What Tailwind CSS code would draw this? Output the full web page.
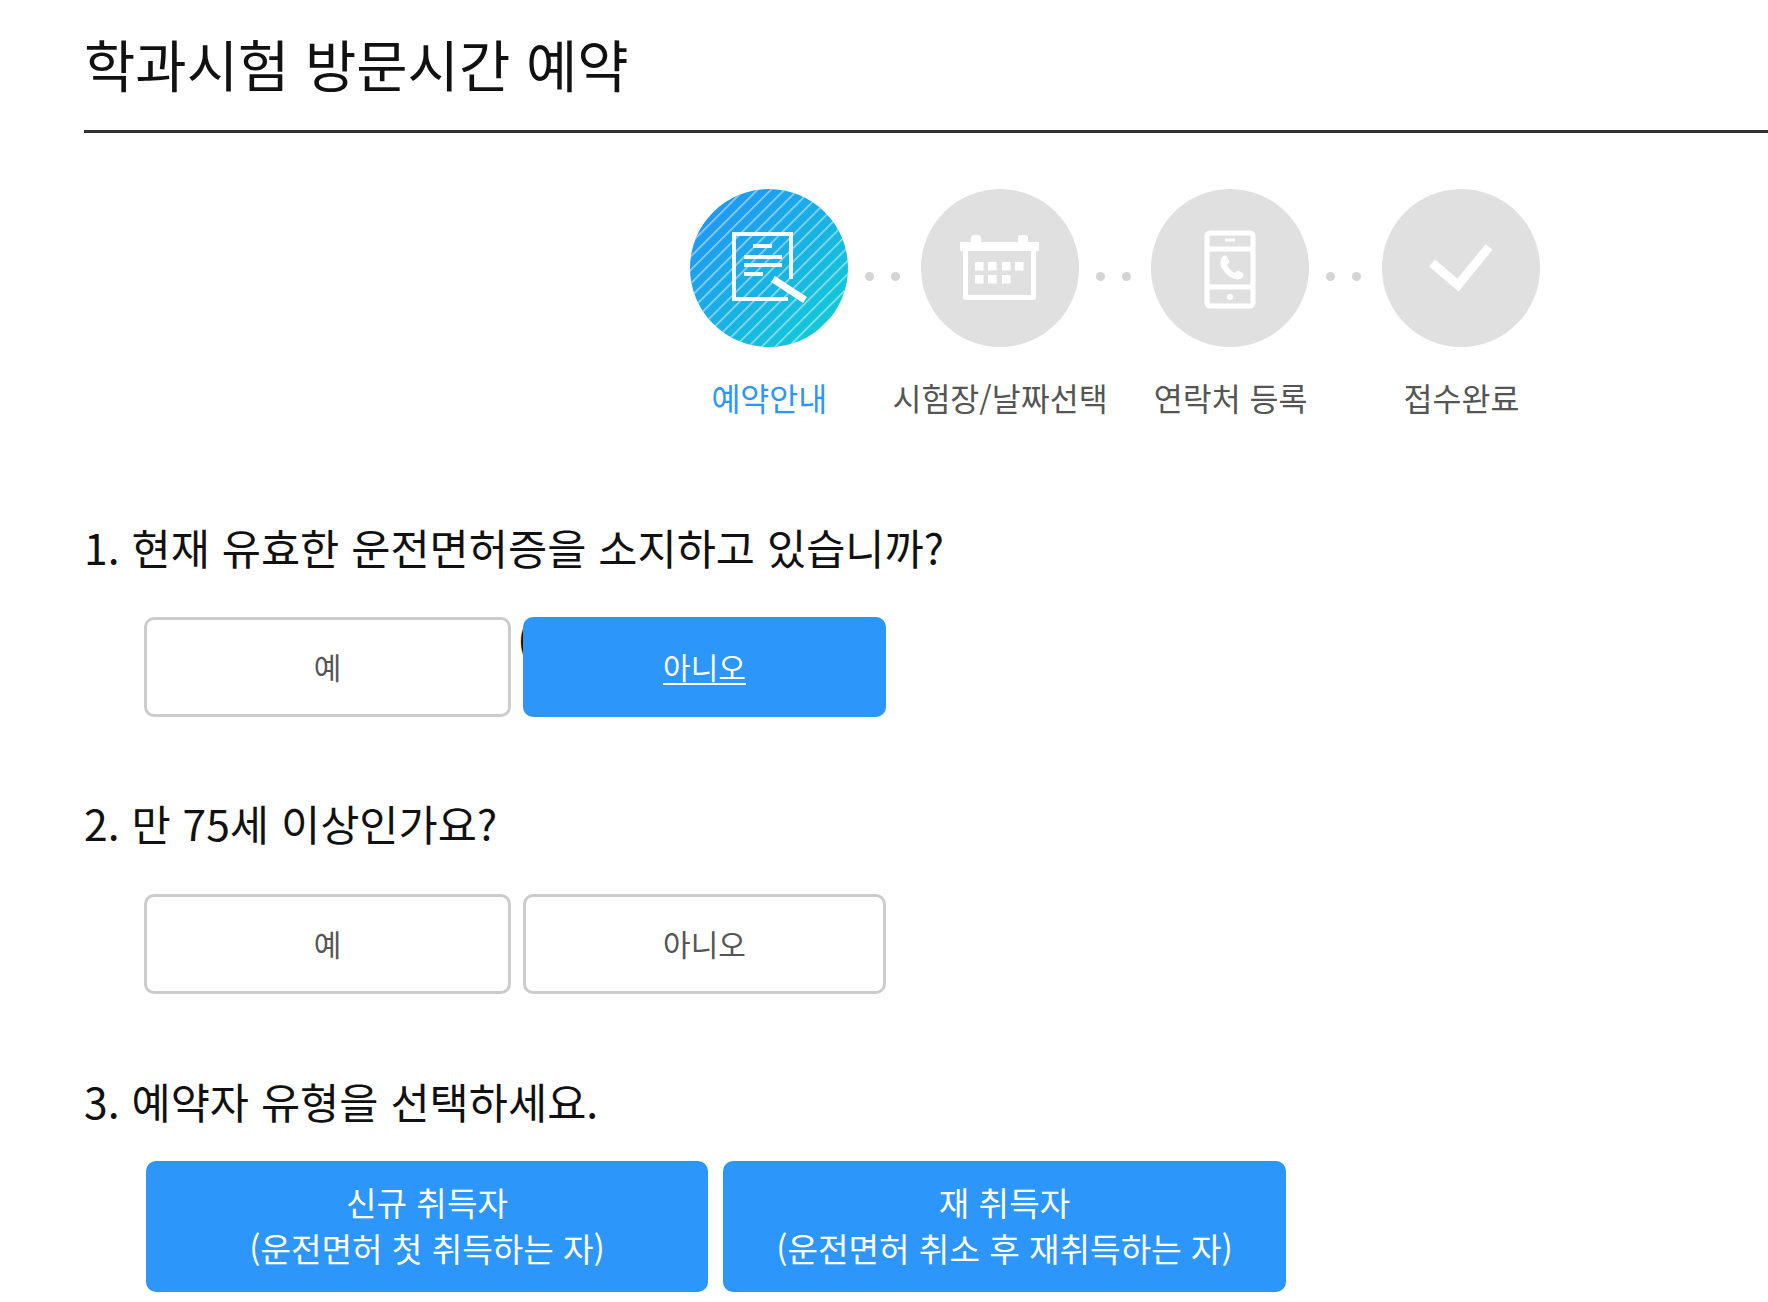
<!DOCTYPE html>
<html lang="ko">
<head>
    <meta charset="UTF-8">
    <title>학과시험 방문시간 예약</title>
    <script src="https://cdn.jsdelivr.net/npm/@tailwindcss/browser@4"></script>
</head>
<body class="bg-white font-['Noto_Sans_CJK_KR','Noto_Sans',sans-serif] text-[#111] overflow-hidden">
    <div class="pl-[84px] w-[1768px] h-[1302px]">
        <!-- 제목 -->
        <h1 class="h-[133px] pt-[26px] border-b-[3px] border-[#333] text-[55.8px] leading-[74px] font-normal">학과시험 방문시간 예약</h1>

        <!-- 단계 -->
        <div class="ml-[606px] mt-[56px] flex items-center">
            <svg class="w-[158px] h-[158px]" viewBox="0 0 158 158" fill="none">
                <defs>
                    <linearGradient id="step1" x1="0" y1="0" x2="1" y2="1">
                        <stop offset="0.1" stop-color="#2196f3"/>
                        <stop offset="0.9" stop-color="#12cbd6"/>
                    </linearGradient>
                    <pattern id="stripes" width="9.5" height="9.5" patternUnits="userSpaceOnUse" patternTransform="rotate(45)">
                        <rect width="1.5" height="9.5" fill="#fff" fill-opacity="0.55"/>
                    </pattern>
                </defs>
                <circle cx="79" cy="79" r="79" fill="url(#step1)"/>
                <circle cx="79" cy="79" r="79" fill="url(#stripes)"/>
                <g stroke="#fff" stroke-width="4" stroke-opacity="0.95">
                    <path d="M101 90V45H44v65h54"/>
                    <path d="M63 57h19M54 68h38M54 76h38M54 85h19"/>
                </g>
                <path d="M83 90l32 21" stroke="#fff" stroke-width="7"/>
            </svg>
            <div class="w-[72.7px] pr-[4px] flex justify-center gap-[17px] pt-[17px]">
                <span class="w-[9px] h-[9px] rounded-full bg-[#d4d4d4]"></span>
                <span class="w-[9px] h-[9px] rounded-full bg-[#d4d4d4]"></span>
            </div>
            <svg class="w-[158px] h-[158px]" viewBox="0 0 158 158" fill="none">
                <circle cx="79" cy="79" r="79" fill="#e0e0e0"/>
                <g fill="#fff">
                    <path d="M39 53h11v-4a3 3 0 0 1 3-3h4a3 3 0 0 1 3 3v4h37v-4a3 3 0 0 1 3-3h4a3 3 0 0 1 3 3v4h11v9h-3v46a3 3 0 0 1-3 3H45a3 3 0 0 1-3-3V62h-3zM47 62v44h63V62z" fill-rule="evenodd"/>
                    <rect x="54" y="73" width="8.500" height="8.500"/><rect x="67" y="73" width="8.500" height="8.500"/><rect x="81" y="73" width="8.500" height="8.500"/><rect x="94" y="73" width="8.500" height="8.500"/>
                    <rect x="54" y="86" width="8.500" height="8.500"/><rect x="67" y="86" width="8.500" height="8.500"/><rect x="81" y="86" width="8.500" height="8.500"/>
                </g>
            </svg>
            <div class="w-[72.7px] pr-[4px] flex justify-center gap-[17px] pt-[17px]">
                <span class="w-[9px] h-[9px] rounded-full bg-[#d4d4d4]"></span>
                <span class="w-[9px] h-[9px] rounded-full bg-[#d4d4d4]"></span>
            </div>
            <svg class="w-[158px] h-[158px]" viewBox="0 0 158 158" fill="none">
                <circle cx="79" cy="79" r="79" fill="#e0e0e0"/>
                <rect x="56" y="44" width="46" height="73" rx="3" stroke="#fff" stroke-width="5"/>
                <path d="M56 60h46M56 98h46" stroke="#fff" stroke-width="5"/>
                <path d="M74 51h10" stroke="#fff" stroke-width="3"/>
                <circle cx="79" cy="108" r="3" fill="#fff"/>
                <path d="M71 68c2-2 4-2 5 0l2 4c.5 1.500-.5 2.500-2 3.500 1 3.500 4 7 8 8.500 1-1.500 2.500-2.500 4-2l3.500 2c1.500 1 1.500 3 0 4.500-2 2-5 2.500-8 1.500-6-2-11-7-13.500-13-1-3-1-6.500 1-9z" fill="#fff"/>
            </svg>
            <div class="w-[72.7px] pr-[4px] flex justify-center gap-[17px] pt-[17px]">
                <span class="w-[9px] h-[9px] rounded-full bg-[#d4d4d4]"></span>
                <span class="w-[9px] h-[9px] rounded-full bg-[#d4d4d4]"></span>
            </div>
            <svg class="w-[158px] h-[158px]" viewBox="0 0 158 158" fill="none">
                <circle cx="79" cy="79" r="79" fill="#e0e0e0"/>
                <path d="M50 74l26 22 31-38" stroke="#fff" stroke-width="9"/>
            </svg>
        </div>
        <div class="ml-[570px] mt-[28px] flex text-[31.5px] leading-[44px] text-[#555] text-center">
            <div class="w-[230.7px] text-[#2d96fa]">예약안내</div>
            <div class="w-[230.7px]">시험장/날짜선택</div>
            <div class="w-[230.7px]">연락처 등록</div>
            <div class="w-[230.7px]">접수완료</div>
        </div>

        <!-- 질문 1 -->
        <p class="mt-[99px] text-[42.6px] leading-[58px]">1. 현재 유효한 운전면허증을 소지하고 있습니까?</p>
        <div class="relative ml-[60px] mt-[41px] flex gap-[12px] text-[30px]">
            <span class="absolute left-[373px] top-[-6px] text-[42.6px] leading-[58px]">(</span>
            <a class="flex items-center justify-center w-[367px] h-[100px] pb-[2px] border-[3px] border-[#ccc] rounded-[10px] text-[#555]">예</a>
            <a class="relative flex items-center justify-center w-[363px] h-[100px] pb-[2px] bg-[#2d96fa] rounded-[10px] text-white underline decoration-2 underline-offset-4">아니오</a>
        </div>

        <!-- 질문 2 -->
        <p class="mt-[77px] text-[42.6px] leading-[58px]">2. 만 75세 이상인가요?</p>
        <div class="ml-[60px] mt-[42px] flex gap-[12px] text-[30px] text-[#555]">
            <a class="flex items-center justify-center w-[367px] h-[100px] pb-[2px] border-[3px] border-[#ccc] rounded-[10px]">예</a>
            <a class="flex items-center justify-center w-[363px] h-[100px] pb-[2px] border-[3px] border-[#ccc] rounded-[10px]">아니오</a>
        </div>

        <!-- 질문 3 -->
        <p class="mt-[78px] text-[42.6px] leading-[58px]">3. 예약자 유형을 선택하세요.</p>
        <div class="ml-[62px] mt-[31px] flex gap-[15px] text-[33.2px] leading-[46px] text-white text-center">
            <a class="flex flex-col items-center justify-center w-[562px] h-[131px] pb-[3px] bg-[#2d96fa] rounded-[10px]"><span>신규 취득자</span><span>(운전면허 첫 취득하는 자)</span></a>
            <a class="flex flex-col items-center justify-center w-[563px] h-[131px] pb-[3px] bg-[#2d96fa] rounded-[10px]"><span>재 취득자</span><span>(운전면허 취소 후 재취득하는 자)</span></a>
        </div>
    </div>
</body>
</html>
